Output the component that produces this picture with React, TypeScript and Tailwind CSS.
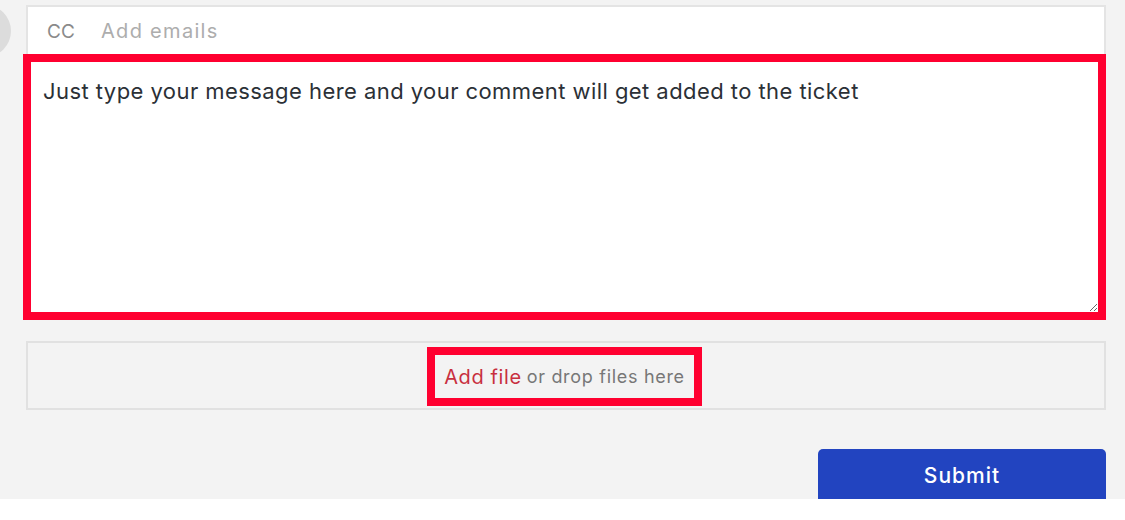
const font = "font-['Inter','Open_Sans',sans-serif]"

export default function App() {
    return (
        <div className={`w-[1125px] h-[520px] bg-white overflow-hidden ${font}`}>
            <div className="h-[499px] bg-[#f3f3f3] overflow-hidden pt-[5px] pl-[26px] pr-[19px]">
                {/* CC row */}
                <div className="flex items-start h-[49px]">
                    <div className="w-[52px] h-[52px] shrink-0 rounded-full bg-[#dcdcdc] -ml-[67px] mr-[15px]" />
                    <div className="flex-1 h-[49px] bg-white border-2 border-b-0 border-[#e4e4e4] flex items-baseline pt-[9px] pl-[19px] whitespace-nowrap">
                        <span className="text-[#8a8a8a] text-[19px] w-[54px]">CC</span>
                        <span className="text-[#adadad] text-[20px] tracking-[1.3px]">Add emails</span>
                    </div>
                </div>

                {/* Message box */}
                <textarea
                    className="block -ml-[3px] w-[1083px] h-[266px] bg-white border-8 border-[#ff0030] rounded-none outline-none pl-[12px] pt-[14px] text-[22px] leading-[30px] tracking-[0.44px] text-[#2b3036]"
                    defaultValue="Just type your message here and your comment will get added to the ticket"
                />

                {/* Drop zone */}
                <div className="mt-[21px] h-[69px] border-2 border-[#e1e1e1] flex items-center justify-center pr-[3px] pt-[2px]">
                    <div className="w-[275px] h-[59px] border-8 border-[#ff0030] flex items-center justify-center gap-[5px] text-[18px] tracking-[0.7px] whitespace-nowrap">
                        <span className="text-[#c8303f] text-[20px] tracking-[0.6px]">Add file</span>
                        <span className="text-[#777777]">or drop files here</span>
                    </div>
                </div>

                {/* Submit */}
                <div className="mt-[39px] flex justify-end">
                    <button className="w-[288px] h-[60px] pb-[7px] rounded-[5px] bg-[#2244c0] text-white text-[21px] font-medium tracking-[1px]">
                        Submit
                    </button>
                </div>
            </div>
        </div>
    )
}
